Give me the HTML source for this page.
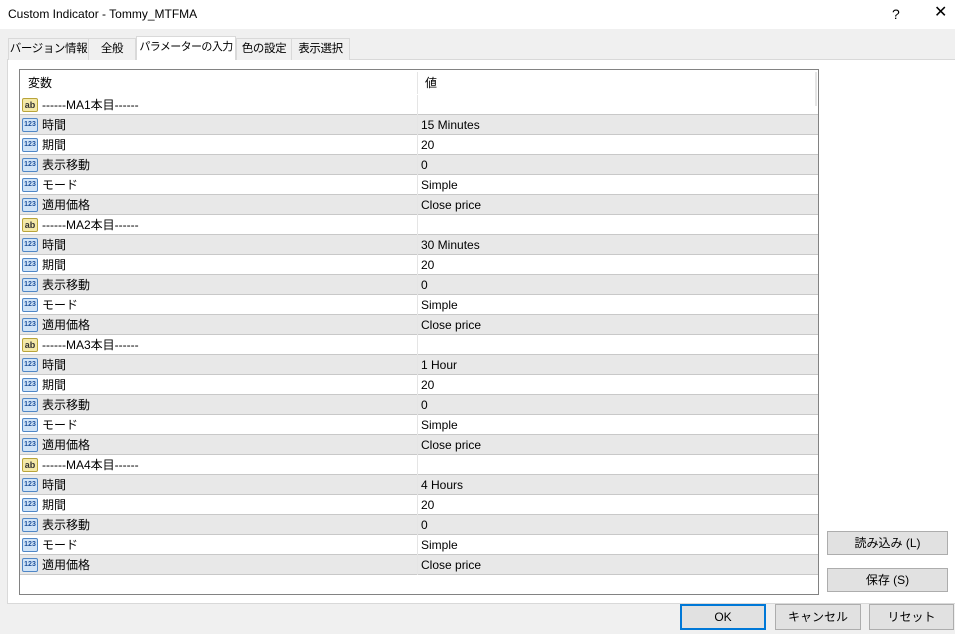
<!DOCTYPE html><html><head><meta charset="utf-8"><style>
*{margin:0;padding:0;box-sizing:border-box}
body{width:955px;height:634px;background:#f0f0f0;font-family:"Liberation Sans","Noto Sans CJK JP",sans-serif;font-size:12px;line-height:14px;color:#000;position:relative;overflow:hidden;white-space:nowrap}
.a{position:absolute}
.title{left:0;top:0;width:955px;height:29px;background:#fff}
.tab{position:absolute;top:38px;height:22px;border:1px solid #d9d9d9;border-bottom:none;background:#f0f0f0;text-align:center;line-height:20px;font-size:11.5px;letter-spacing:-0.4px}
.panel{left:7px;top:59px;width:960px;height:545px;background:#fff;border:1px solid #d9d9d9}
.tbl{left:19px;top:69px;width:800px;height:526px;border:1px solid #828282;background:#fff}
.row{position:absolute;left:0;width:798px;height:20px;border-bottom:1px solid #c8c8c8}
.row.g{background:#e8e8e8}
.row span{position:absolute;top:0;line-height:20px}
.n{left:22px}.v{left:401px}
.ic{position:absolute;left:2px;top:3px;width:16px;height:14px;border-radius:2px;font-size:7px;font-weight:bold;line-height:12px;text-align:center}
.i1{background:#cfe3f7;border:1px solid #4f86c6;color:#1c4f9a}
.i2{background:#f4e9a8;border:1px solid #b9a43a;color:#333;font-size:9px}
.btn{position:absolute;background:#e1e1e1;border:1px solid #adadad;text-align:center}
</style></head><body>
<div class="a title"></div>
<div class="a" style="left:8px;top:7px;font-size:12px">Custom Indicator - Tommy_MTFMA</div>
<div class="a" style="left:892px;top:7px;font-size:14px">?</div>
<div class="a" style="left:934px;top:6px;font-size:16px">✕</div>
<div class="a panel"></div>
<div class="tab" style="left:8px;width:81px">バージョン情報</div>
<div class="tab" style="left:88px;width:48px">全般</div>
<div class="tab" style="left:236px;width:56px">色の設定</div>
<div class="tab" style="left:291px;width:59px">表示選択</div>
<div class="tab" style="left:136px;top:36px;height:24px;width:100px;background:#fff;line-height:20px;font-size:11px;letter-spacing:-0.6px">パラメーターの入力</div>
<div class="a tbl">
<div class="a" style="left:8px;top:6px">変数</div>
<div class="a" style="left:405px;top:6px">値</div>
<div class="a" style="left:397px;top:2px;width:1px;height:22px;background:#e5e5e5"></div>
<div class="a" style="left:795px;top:2px;width:2px;height:34px;background:#e5e5e5"></div>
<div id="rows"></div>
</div>
<div class="btn" style="left:827px;top:531px;width:121px;height:24px;line-height:22px">読み込み (L)</div>
<div class="btn" style="left:827px;top:568px;width:121px;height:24px;line-height:22px">保存 (S)</div>
<div class="btn" style="left:680px;top:604px;width:86px;height:26px;line-height:22px;border:2px solid #0078d7">OK</div>
<div class="btn" style="left:775px;top:604px;width:86px;height:26px;line-height:24px">キャンセル</div>
<div class="btn" style="left:869px;top:604px;width:85px;height:26px;line-height:24px">リセット</div>
<script>
var vals=[["15 Minutes"],["30 Minutes"],["1 Hour"],["4 Hours"]];
var h='',i=0;
for(var m=0;m<4;m++){
 var items=[["------MA"+(m+1)+"本目------","",1],["時間",vals[m][0]],["期間","20"],["表示移動","0"],["モード","Simple"],["適用価格","Close price"]];
 items.forEach(function(it){
  var top=25+i*20;
  h+='<div class="row'+(i%2?' g':'')+'" style="top:'+top+'px">'+(it[2]?'<div class="ic i2">ab</div>':'<div class="ic i1">123</div>')+'<span class="n">'+it[0]+'</span><span class="v">'+it[1]+'</span><div style="position:absolute;left:397px;top:0;width:1px;height:20px;background:#e5e5e5"></div></div>';
  i++;
 });
}
document.getElementById('rows').innerHTML=h;
</script>
</body></html>
